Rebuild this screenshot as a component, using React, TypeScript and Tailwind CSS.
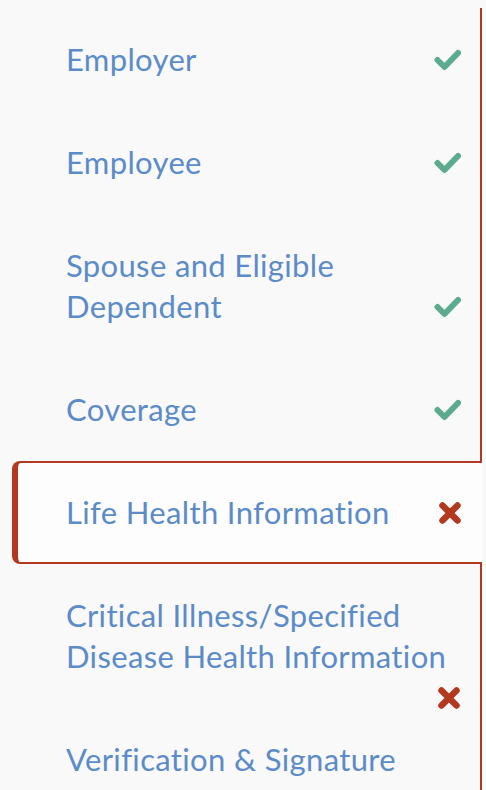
type Step = {
  label: string;
  done: boolean;
  active?: boolean;
  iconBelow?: boolean;
};

const steps: Step[] = [
  { label: 'Employer', done: true },
  { label: 'Employee', done: true },
  { label: 'Spouse and Eligible Dependent', done: true },
  { label: 'Coverage', done: true },
  { label: 'Life Health Information', done: false, active: true },
  { label: 'Critical Illness/Specified Disease Health Information', done: false, iconBelow: true },
  { label: 'Verification & Signature', done: false },
];

function CheckIcon() {
  return (
    <svg width="28" height="24" viewBox="0 0 28 24" className="block">
      <polyline
        points="3.5,12 10.5,19 24,5"
        fill="none"
        stroke="#5dab8e"
        strokeWidth="6"
        strokeLinecap="round"
        strokeLinejoin="round"
      />
    </svg>
  );
}

function CrossIcon() {
  return (
    <svg width="24" height="24" viewBox="0 0 24 24" className="block">
      <path
        d="M4.5 4.5 L19.5 19.5 M19.5 4.5 L4.5 19.5"
        fill="none"
        stroke="#b2391f"
        strokeWidth="6.5"
        strokeLinecap="round"
      />
    </svg>
  );
}

function StatusIcon({ step }: { step: Step }) {
  if (step.active || step.iconBelow) return <CrossIcon />;
  if (step.done) return <CheckIcon />;
  return null;
}

export default function App() {
  return (
    <div className="min-h-[790px] bg-[#f9f9f9] pt-2 font-['Lato','Liberation_Sans',sans-serif] text-[31px] leading-[41px] tracking-[0.35px] text-[#5b8bc8] overflow-hidden">
      <nav className="w-[482px] border-r-2 border-[#b2391f]">
        {steps.map((step) => (
          <div
            key={step.label}
            className={
              step.active
                ? 'ml-3 -mr-[2px] rounded-l-lg border-y-2 border-l-[6px] border-[#b2391f] bg-[#fdfdfd] py-[29px] pl-[48px] pr-[20px]'
                : 'ml-3 border-y-2 border-l-[6px] border-transparent py-[29px] pl-[48px] pr-[18px]'
            }
          >
            {step.iconBelow ? (
              <div>
                <div className="max-w-[395px]">{step.label}</div>
                <div className="flex h-0 justify-end">
                  <div className="flex h-[41px] shrink-0 items-center pr-[1px]">
                    <StatusIcon step={step} />
                  </div>
                </div>
              </div>
            ) : (
              <div className="flex items-end gap-3">
                <div className="flex-1">{step.label}</div>
                <div className="flex h-[41px] shrink-0 items-center">
                  <StatusIcon step={step} />
                </div>
              </div>
            )}
          </div>
        ))}
      </nav>
    </div>
  );
}
